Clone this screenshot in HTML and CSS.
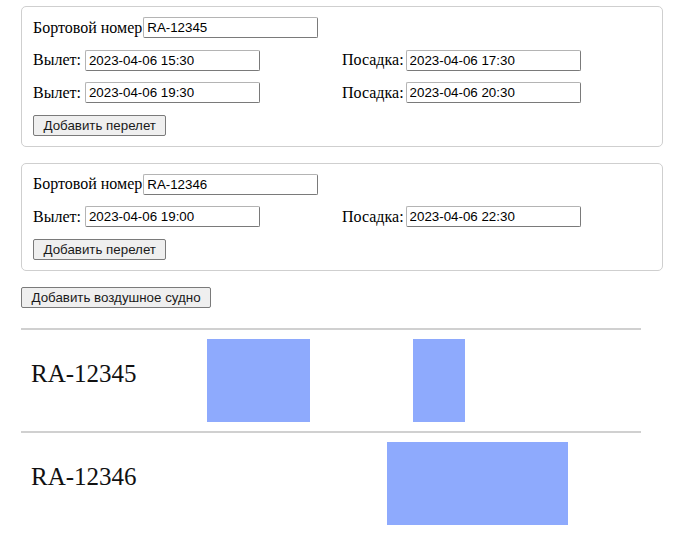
FILE: index.html
```html
<!DOCTYPE html>
<html lang="ru">
<head>
<meta charset="utf-8">
<title>Воздушные суда</title>
<link rel="stylesheet" href="styles.css">
</head>
<body>
<div class="page">
  <div class="card">
    <div class="row">
      <div class="field"><span class="lbl lbl-board">Бортовой номер</span><input class="inp" type="text" value="RA-12345"></div>
    </div>
    <div class="row">
      <div class="field col"><span class="lbl lbl-dep">Вылет:</span><input class="inp" type="text" value="2023-04-06 15:30"></div>
      <div class="field col"><span class="lbl lbl-arr">Посадка:</span><input class="inp" type="text" value="2023-04-06 17:30"></div>
    </div>
    <div class="row">
      <div class="field col"><span class="lbl lbl-dep">Вылет:</span><input class="inp" type="text" value="2023-04-06 19:30"></div>
      <div class="field col"><span class="lbl lbl-arr">Посадка:</span><input class="inp" type="text" value="2023-04-06 20:30"></div>
    </div>
    <div class="row">
      <button class="btn" type="button">Добавить перелет</button>
    </div>
  </div>

  <div class="card">
    <div class="row">
      <div class="field"><span class="lbl lbl-board">Бортовой номер</span><input class="inp" type="text" value="RA-12346"></div>
    </div>
    <div class="row">
      <div class="field col"><span class="lbl lbl-dep">Вылет:</span><input class="inp" type="text" value="2023-04-06 19:00"></div>
      <div class="field col"><span class="lbl lbl-arr">Посадка:</span><input class="inp" type="text" value="2023-04-06 22:30"></div>
    </div>
    <div class="row">
      <button class="btn" type="button">Добавить перелет</button>
    </div>
  </div>

  <div class="actions">
    <button class="btn" type="button">Добавить воздушное судно</button>
  </div>

  <div class="timeline">
    <div class="track">
      <span class="track-label">RA-12345</span>
      <div class="bar" style="left:186px;width:103px"></div>
      <div class="bar" style="left:392px;width:52px"></div>
    </div>
    <div class="track">
      <span class="track-label">RA-12346</span>
      <div class="bar" style="left:366px;width:181px"></div>
    </div>
  </div>
</div>
</body>
</html>
```

FILE: styles.css
```css
html, body {
  margin: 0;
  padding: 0;
  background: #ffffff;
}

body {
  font-family: "Liberation Serif", "Times New Roman", serif;
  font-size: 16px;
  color: #000;
}

.page {
  padding: 6px 0 0 21px;
}

.card {
  width: 642px;
  box-sizing: border-box;
  border: 1px solid #cfcfcf;
  border-radius: 5px;
  padding: 10px 11px 10px 11px;
  margin-bottom: 16px;
  display: flex;
  flex-direction: column;
  gap: 11.5px;
}

.row {
  display: flex;
  height: 21px;
  align-items: center;
}

.field {
  display: flex;
  align-items: center;
  height: 21px;
}

.col {
  width: 309px;
  flex: 0 0 309px;
}

.lbl {
  white-space: nowrap;
  line-height: 18px;
}

.lbl-board { margin-right: 1px; }
.lbl-dep { margin-right: 4px; }
.lbl-arr { margin-right: 2px; }

.inp {
  width: 175px;
  height: 21px;
  box-sizing: border-box;
  margin: 0;
  padding: 0 2px 0 3px;
  font-family: "Liberation Sans", Arial, sans-serif;
  font-size: 13.33px;
  color: #000;
  background: #fff;
  border: 1px solid;
  border-color: #b4b4b4 #7a7a7a #7a7a7a #b4b4b4;
  border-radius: 2px;
  outline: none;
}

.btn {
  height: 21px;
  box-sizing: border-box;
  margin: 0;
  padding: 0 9.5px;
  font-family: "Liberation Sans", Arial, sans-serif;
  font-size: 13.33px;
  color: #1a1a1a;
  background: #efefef;
  border: 1px solid #7a7a7a;
  border-radius: 2px;
}

.actions {
  margin-bottom: 20px;
  display: flex;
}

.timeline {
  width: 620px;
}

.track {
  position: relative;
  height: 101px;
  border-top: 2px solid #d0d0d0;
}

.track-label {
  display: block;
  padding: 29px 0 0 10px;
  font-size: 25px;
  line-height: 29px;
  color: #111;
}

.bar {
  position: absolute;
  top: 9px;
  height: 83px;
  background: #8eaafd;
}
```
